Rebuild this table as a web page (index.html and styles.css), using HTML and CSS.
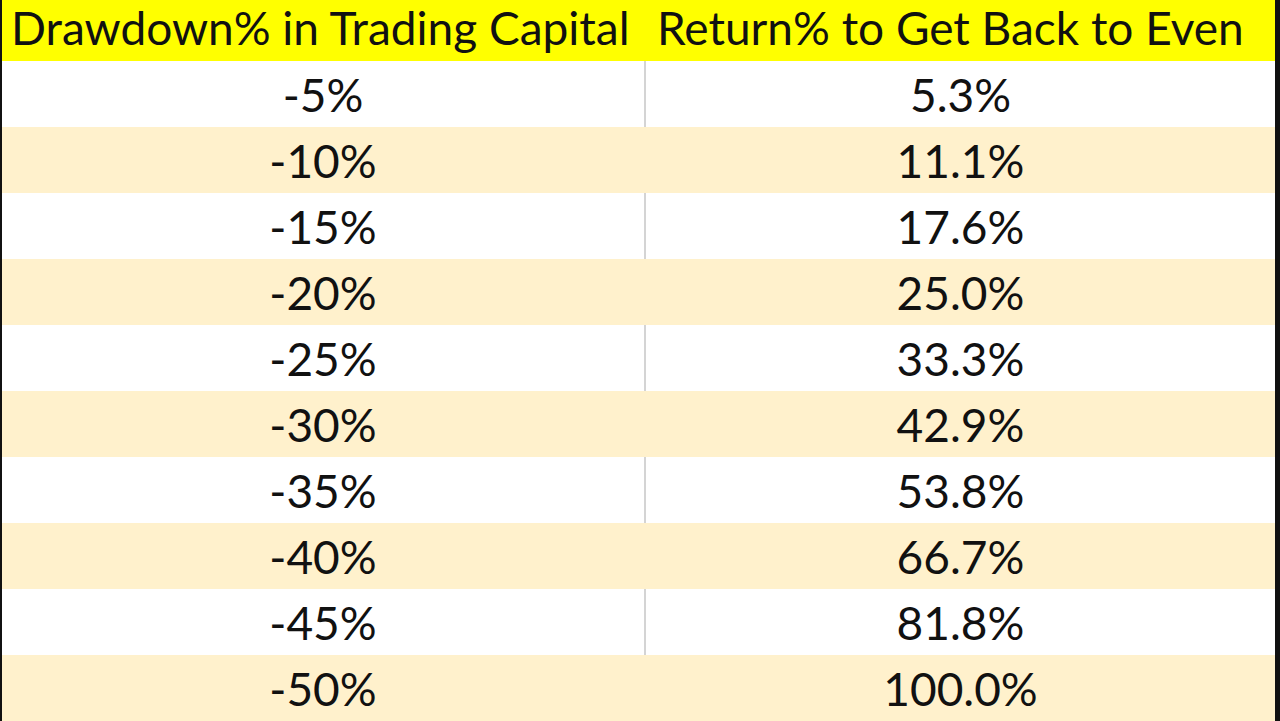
FILE: index.html
```html
<!DOCTYPE html>
<html>
<head>
<meta charset="utf-8">
<link rel="stylesheet" href="styles.css">
</head>
<body>
<div class="sheet">
  <div class="row head">
    <div class="cell">Drawdown% in Trading Capital</div>
    <div class="cell">Return% to Get Back to Even</div>
  </div>
  <div class="row odd"><div class="cell">-5%</div><div class="cell">5.3%</div></div>
  <div class="row even"><div class="cell">-10%</div><div class="cell">11.1%</div></div>
  <div class="row odd"><div class="cell">-15%</div><div class="cell">17.6%</div></div>
  <div class="row even"><div class="cell">-20%</div><div class="cell">25.0%</div></div>
  <div class="row odd"><div class="cell">-25%</div><div class="cell">33.3%</div></div>
  <div class="row even"><div class="cell">-30%</div><div class="cell">42.9%</div></div>
  <div class="row odd"><div class="cell">-35%</div><div class="cell">53.8%</div></div>
  <div class="row even"><div class="cell">-40%</div><div class="cell">66.7%</div></div>
  <div class="row odd"><div class="cell">-45%</div><div class="cell">81.8%</div></div>
  <div class="row even"><div class="cell">-50%</div><div class="cell">100.0%</div></div>
</div>
</body>
</html>
```
FILE: styles.css
```css
html, body {
  margin: 0;
  padding: 0;
  background: #000;
}
.sheet {
  width: 1280px;
  height: 721px;
  box-sizing: border-box;
  border-left: 2px solid #111;
  border-right: 5px solid #111;
  background: #fff;
  font-family: Lato, "Liberation Sans", sans-serif;
  color: #111;
  overflow: hidden;
}
.row {
  display: grid;
  grid-template-columns: 644px 1fr;
  height: 66px;
}
.row .cell {
  display: flex;
  align-items: center;
  justify-content: center;
  font-size: 46px;
  line-height: 1;
  padding-top: 2px;
}
.head {
  height: 61px;
  background: #ffff00;
}
.head .cell {
  justify-content: flex-start;
  padding-left: 9px;
  padding-top: 0;
  padding-bottom: 5px;
  font-size: 46px;
  white-space: nowrap;
}
.head .cell + .cell {
  padding-left: 11px;
}
.odd {
  background: #ffffff;
}
.odd .cell:first-child {
  border-right: 2px solid #d4d4d4;
}
.even {
  background: #fff1cc;
}
.even .cell:first-child {
  border-right: 2px solid transparent;
}
.head .cell:first-child {
  border-right: 2px solid transparent;
}
```
